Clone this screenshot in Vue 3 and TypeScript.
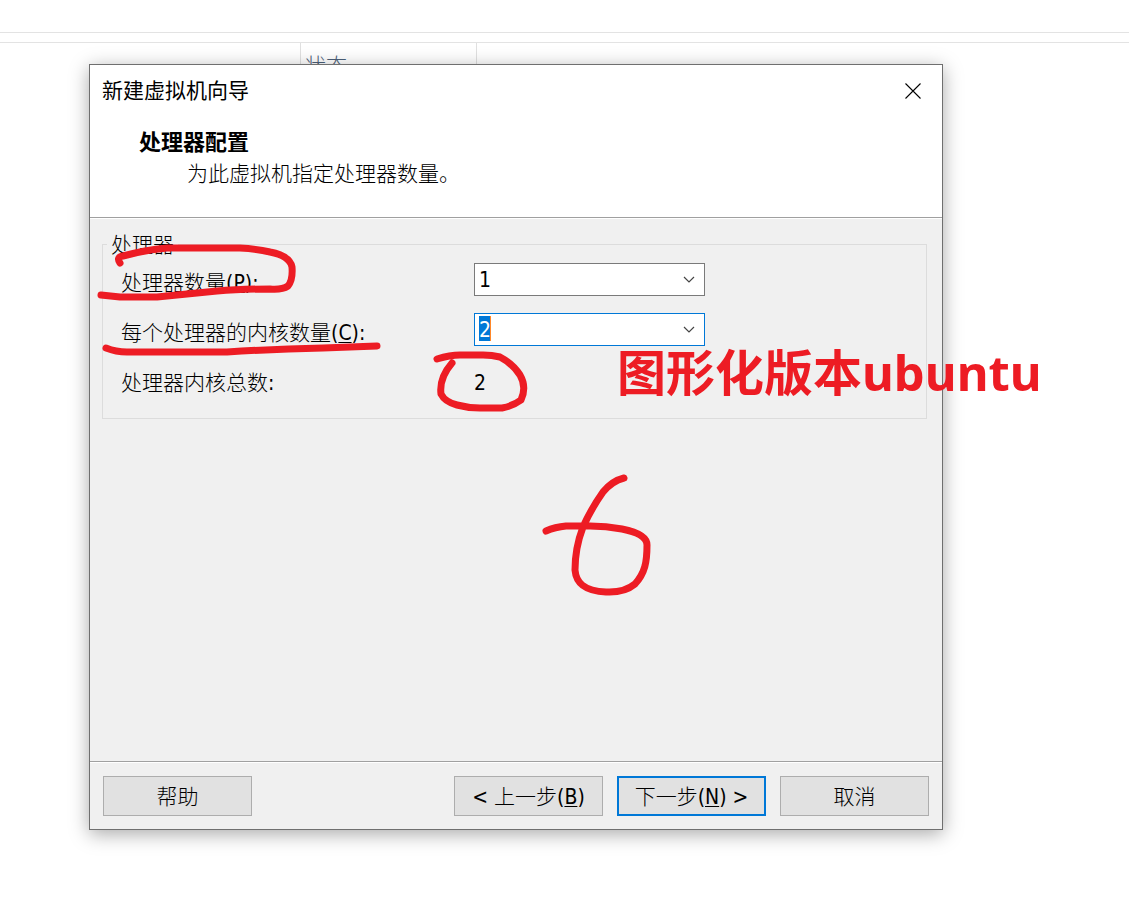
<script setup lang="ts">
import { computed, ref } from 'vue'

const processors = ref<number>(1)
const cores = ref<number>(2)
const total = computed<number>(() => processors.value * cores.value)
const counts: number[] = [1, 2, 4, 8]
</script>

<template>
  <div class="desktop">
    <div class="toolbar"></div>
    <div class="columns">
      <span class="column name"></span>
      <span class="column state">状态</span>
    </div>

    <section class="dialog" role="dialog" aria-labelledby="dialog-title">
      <header class="head">
        <div class="titlebar">
          <span id="dialog-title">新建虚拟机向导</span>
          <button class="close" type="button" aria-label="关闭">
            <svg width="16" height="16" viewBox="0 0 16 16">
              <path d="M0.5 0.5 15.5 15.5M15.5 0.5 0.5 15.5" fill="none" stroke="#000" stroke-width="1.1" />
            </svg>
          </button>
        </div>
        <h1>处理器配置</h1>
        <p>为此虚拟机指定处理器数量。</p>
      </header>

      <main class="body">
        <fieldset>
          <legend>处理器</legend>
          <div class="fields">
            <label for="processors">处理器数量(<u>P</u>):</label>
            <div class="combo">
              <select id="processors" v-model="processors">
                <option v-for="n in counts" :key="n" :value="n">{{ n }}</option>
              </select>
              <svg width="12" height="7" viewBox="0 0 12 7">
                <path d="M1 1 6 6 11 1" fill="none" stroke="#444" stroke-width="1.2" />
              </svg>
            </div>
            <label for="cores">每个处理器的内核数量(<u>C</u>):</label>
            <div class="combo">
              <select id="cores" v-model="cores" class="active">
                <option v-for="n in counts" :key="n" :value="n">{{ n }}</option>
              </select>
              <svg width="12" height="7" viewBox="0 0 12 7">
                <path d="M1 1 6 6 11 1" fill="none" stroke="#444" stroke-width="1.2" />
              </svg>
            </div>
            <label for="total">处理器内核总数:</label>
            <output id="total">{{ total }}</output>
          </div>
        </fieldset>
      </main>

      <footer class="foot">
        <button class="btn help" type="button">帮助</button>
        <button class="btn" type="button">&lt; 上一步(<u>B</u>)</button>
        <button class="btn primary" type="button">下一步(<u>N</u>) &gt;</button>
        <button class="btn" type="button">取消</button>
      </footer>
    </section>

    <svg class="ink" width="1129" height="913" viewBox="0 0 1129 913" aria-hidden="true">
      <path d="M120 263C118 260 117 257 123 256Q145 250 167 248H240Q258 249 270 252Q290 256 292 267Q293 280 288 286Q282 290 270 289Q240 289 217 291L157 297H120L101 295" />
      <path d="M106 348Q116 352 127 352H227Q275 349 323 348L377 346" />
      <path d="M437 359Q450 355 460 355H483Q492 355 500 357Q513 364 520 375Q527 387 521 400Q513 406 502 408H480Q468 408 457 405Q445 402 441 394Q439 378 452 363" />
      <path d="M624 478Q612 481 603 492Q591 509 583 527Q575 548 575 570C576 582 583 591 606 592Q624 593 635 584C645 573 647 562 647 545Q647 534 622 529Q606 526 590 526H566Q555 527 546 531" />
    </svg>
    <div class="note">图形化版本ubuntu</div>
  </div>
</template>

<style>
body {
  margin: 0;
  background: #fff;
}
</style>

<style scoped>
.desktop {
  position: relative;
  min-height: 100vh;
  overflow: hidden;
  box-sizing: border-box;
  background: #fff;
  color: #000;
  font-family: "DejaVu Sans Condensed", "Noto Sans CJK SC", sans-serif;
  font-size: 21px;
  font-weight: 300;
  line-height: 30px;
}

.toolbar {
  height: 9px;
  margin-top: 32px;
  border-top: 1px solid #e3e3e3;
  border-bottom: 1px solid #e3e3e3;
}

.columns {
  display: flex;
  height: 21px;
}

.column {
  box-sizing: border-box;
  border-right: 1px solid #e0e0e0;
}

.name {
  width: 301px;
}

.state {
  width: 176px;
  padding: 8px 4px 0;
  color: #4c607a;
}

.dialog {
  position: relative;
  margin: 0 186px 83px 89px;
  border: 1px solid #6f6f6f;
  background: #f0f0f0;
  box-shadow: 0 4px 18px rgba(0, 0, 0, 0.34);
}

.head {
  height: 152px;
  background: #fff;
  border-bottom: 1px solid #a0a0a0;
}

.titlebar {
  display: flex;
  justify-content: space-between;
  align-items: center;
  height: 52px;
  padding: 0 21px 0 12px;
  font-weight: 400;
}

.close {
  display: flex;
  padding: 0;
  border: 0;
  background: none;
}

h1 {
  margin: 11px 0 0 49px;
  font-size: 22px;
  font-weight: 700;
  line-height: 30px;
}

p {
  margin: 1px 0 0 97px;
}

.body {
  box-sizing: border-box;
  min-height: 544px;
  padding: 11px 15px 11px 12px;
  border-top: 1px solid #fff;
  border-bottom: 1px solid #a0a0a0;
}

fieldset {
  margin: 0;
  padding: 5px 18px 22px;
  border: 1px solid #dcdcdc;
}

legend {
  box-sizing: border-box;
  height: 28px;
  margin-left: -14px;
  padding: 0 4px;
  line-height: 30px;
}

.fields {
  display: grid;
  grid-template-columns: 353px 231px;
  grid-auto-rows: 33px;
  row-gap: 17px;
}

label,
output {
  padding-top: 5px;
}

.combo {
  position: relative;
}

.combo svg {
  position: absolute;
  right: 10px;
  top: 13px;
  pointer-events: none;
}

select {
  appearance: none;
  display: block;
  box-sizing: border-box;
  width: 100%;
  height: 33px;
  padding: 0 24px 0 4px;
  border: 1px solid #7a7a7a;
  border-radius: 0;
  background: #fff;
  color: #000;
  font: inherit;
  outline: none;
}

select.active {
  border-color: #0078d7;
  background:
    linear-gradient(90deg, #0078d7 11px, #ff8728 11px) 4px 2px / 12px 25px no-repeat,
    #fff;
  color: #fff;
}

option {
  color: #000;
}

.foot {
  display: flex;
  gap: 14px;
  padding: 13px;
  border-top: 1px solid #fff;
}

.btn {
  box-sizing: border-box;
  width: 149px;
  height: 40px;
  padding: 2px 0 0;
  border: 1px solid #adadad;
  border-radius: 0;
  background: #e1e1e1;
  color: #000;
  font: inherit;
}

.help {
  margin-right: auto;
}

.primary {
  border: 2px solid #0078d7;
}

u {
  text-decoration-thickness: 1px;
  text-underline-offset: 2px;
}

.ink {
  position: absolute;
  left: 0;
  top: 0;
  pointer-events: none;
  fill: none;
  stroke: #ed1c24;
  stroke-width: 7px;
  stroke-linecap: round;
  stroke-linejoin: round;
}

.note {
  position: absolute;
  left: 617px;
  top: 337px;
  color: #ed1c24;
  font-family: "Noto Sans", "Noto Sans CJK SC", sans-serif;
  font-size: 49px;
  font-weight: 700;
  line-height: 70px;
  white-space: nowrap;
  pointer-events: none;
}
</style>
